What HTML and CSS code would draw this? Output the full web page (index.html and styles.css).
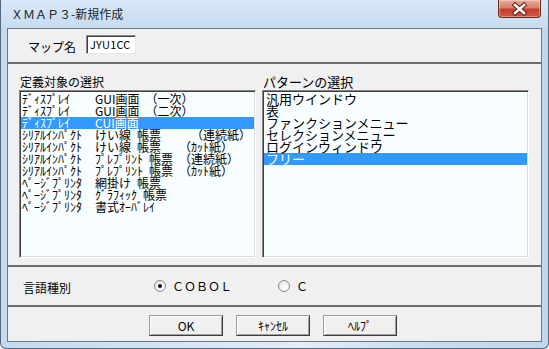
FILE: index.html
```html
<!DOCTYPE html>
<html lang="ja">
<head>
<meta charset="utf-8">
<title>ＸＭＡＰ３-新規作成</title>
<link rel="stylesheet" href="styles.css">
</head>
<body>
<div class="window">
  <div class="titlebar">
    <span class="title">ＸＭＡＰ３-新規作成</span>
    <div class="close">
      <svg width="43" height="18" viewBox="0 0 43 18">
        <path d="M17 5 L26 13 M26 5 L17 13" stroke="#5b2218" stroke-width="4.6" stroke-linecap="square" fill="none"/>
        <path d="M17 5 L26 13 M26 5 L17 13" stroke="#ffffff" stroke-width="2.6" stroke-linecap="square" fill="none"/>
      </svg>
    </div>
  </div>
  <div class="client">
    <div class="sec-name">
      <span class="name-label">マップ名</span>
      <div class="input">JYU1CC</div>
    </div>
    <div class="sep"></div>
    <div class="sec-lists">
      <div class="col">
        <div class="cap">定義対象の選択</div>
        <div class="listbox lb-left">
          <div class="row"><span class="c1">ﾃﾞｨｽﾌﾟﾚｲ</span><span class="c2">GUI画面&#8194;（一次）</span></div>
          <div class="row"><span class="c1">ﾃﾞｨｽﾌﾟﾚｲ</span><span class="c2">GUI画面&#8194;（二次）</span></div>
          <div class="row sel"><span class="c1">ﾃﾞｨｽﾌﾟﾚｲ</span><span class="c2">CUI画面</span></div>
          <div class="row"><span class="c1">ｼﾘｱﾙｲﾝﾊﾟｸﾄ</span><span class="c2">けい線&#8194;帳票　　&#8194;（連続紙）</span></div>
          <div class="row"><span class="c1">ｼﾘｱﾙｲﾝﾊﾟｸﾄ</span><span class="c2">けい線&#8194;帳票　　（ｶｯﾄ紙）</span></div>
          <div class="row"><span class="c1">ｼﾘｱﾙｲﾝﾊﾟｸﾄ</span><span class="c2">ﾌﾟﾚﾌﾟﾘﾝﾄ&#8194;帳票　（連続紙）</span></div>
          <div class="row"><span class="c1">ｼﾘｱﾙｲﾝﾊﾟｸﾄ</span><span class="c2">ﾌﾟﾚﾌﾟﾘﾝﾄ&#8194;帳票　（ｶｯﾄ紙）</span></div>
          <div class="row"><span class="c1">ﾍﾟｰｼﾞﾌﾟﾘﾝﾀ</span><span class="c2">網掛け&#8194;帳票</span></div>
          <div class="row"><span class="c1">ﾍﾟｰｼﾞﾌﾟﾘﾝﾀ</span><span class="c2">ｸﾞﾗﾌｨｯｸ&#8194;帳票</span></div>
          <div class="row"><span class="c1">ﾍﾟｰｼﾞﾌﾟﾘﾝﾀ</span><span class="c2">書式ｵｰﾊﾞﾚｲ</span></div>
        </div>
      </div>
      <div class="col">
        <div class="cap">パターンの選択</div>
        <div class="listbox lb-right">
          <div class="row">汎用ウインドウ</div>
          <div class="row">表</div>
          <div class="row">ファンクションメニュー</div>
          <div class="row">セレクションメニュー</div>
          <div class="row">ログインウィンドウ</div>
          <div class="row sel">フリー</div>
        </div>
      </div>
    </div>
    <div class="sep"></div>
    <div class="sec-lang">
      <span class="lang-label">言語種別</span>
      <label class="radio radio-cobol"><span class="dot on"></span><span class="rtext">ＣＯＢＯＬ</span></label>
      <label class="radio"><span class="dot"></span><span class="rtext">Ｃ</span></label>
    </div>
    <div class="sep"></div>
    <div class="sec-buttons">
      <div class="btn">OK</div>
      <div class="btn">ｷｬﾝｾﾙ</div>
      <div class="btn">ﾍﾙﾌﾟ</div>
    </div>
  </div>
</div>
</body>
</html>
```
FILE: styles.css
```css
html, body {
  margin: 0;
  padding: 0;
  background: #ffffff;
}
body {
  font-family: "Noto Sans CJK JP", "Noto Sans", sans-serif;
  font-size: 12px;
  color: #000;
}
.window {
  width: 549px;
  height: 349px;
  box-sizing: border-box;
  display: flex;
  flex-direction: column;
  border: 1px solid #55687c;
  border-top: none;
  border-radius: 0 0 6px 6px;
  padding: 0 6px 6px 6px;
  background: linear-gradient(90deg, #c4dbf0 0%, #d2e4f5 30%, #e2eef9 55%, #c9def2 75%, #bfd7ee 100%);
}
.titlebar {
  height: 28px;
  flex: none;
  display: flex;
  justify-content: space-between;
  align-items: flex-start;
  margin: 0 -6px 0 -6px;
  padding: 0 7px 0 10px;
  background: linear-gradient(180deg, #d8e8f7 0%, #cfe2f4 50%, #c5dcf1 100%);
}
.title {
  margin-top: 6px;
  font-size: 12px;
  line-height: 16px;
  color: #222;
}
.close {
  width: 43px;
  height: 18px;
  box-sizing: border-box;
  border: 1px solid #6a2a20;
  border-top: none;
  border-radius: 0 0 4px 4px;
  background: linear-gradient(180deg, #e9a99b 0%, #d9806e 45%, #c5402c 55%, #d0583f 100%);
  box-shadow: inset 0 0 0 1px rgba(255,255,255,0.35);
  overflow: hidden;
}
.close svg {
  display: block;
  margin-left: -1px;
}
.client {
  flex: 1;
  display: flex;
  flex-direction: column;
  border: 1px solid #6d7885;
  background: #f0f0f0;
}
.sep {
  height: 2px;
  flex: none;
  background: #6c6c6c;
}
.sec-name {
  height: 33px;
  flex: none;
  display: flex;
  align-items: center;
  padding-left: 20px;
  box-sizing: border-box;
}
.name-label {
  line-height: 14px;
  margin-top: 2px;
  width: 58px;
}
.input {
  width: 50px;
  height: 19px;
  box-sizing: border-box;
  margin-top: -2px;
  background: #fff;
  border: 1px solid;
  border-color: #8a8a8a #e6e6e6 #e6e6e6 #8a8a8a;
  box-shadow: inset 1px 1px 0 #3c3c3c;
  padding: 1px 0 0 3px;
  font-size: 11px;
  line-height: 15px;
  letter-spacing: 0.2px;
}
.sec-lists {
  height: 201px;
  flex: none;
  box-sizing: border-box;
  padding: 10px 0 0 11px;
  display: flex;
  gap: 6px;
}
.col {
  display: flex;
  flex-direction: column;
}
.cap {
  height: 16px;
  line-height: 16px;
  padding-left: 1px;
}
.col:last-child .cap {
  font-size: 13px;
}
.listbox {
  height: 168px;
  box-sizing: border-box;
  background: #f8fdff;
  border: 1px solid;
  border-color: #858585 #ffffff #ffffff #858585;
  box-shadow: inset 1px 1px 0 #3f3f3f, inset -1px -1px 0 #dcdcdc;
  padding: 2px 1px 1px 1px;
  overflow: hidden;
}
.lb-left {
  width: 237px;
}
.lb-right {
  width: 267px;
}
.row {
  height: 12px;
  line-height: 12px;
  padding-left: 1px;
  white-space: pre;
}
.lb-left .row {
  font-size: 12px;
}
.lb-right .row {
  font-size: 13px;
  padding-left: 2px;
}
.row.sel {
  background: #3399ff;
  color: #fff;
}
.c1 {
  display: inline-block;
  width: 73px;
}
.sec-lang {
  height: 38px;
  flex: none;
  display: flex;
  align-items: center;
  padding-left: 15px;
}
.lang-label {
  width: 131px;
  margin-top: 2px;
}
.radio {
  display: flex;
  align-items: center;
  gap: 6px;
}
.radio-cobol {
  width: 124px;
}
.dot {
  width: 12px;
  height: 12px;
  box-sizing: border-box;
  border-radius: 50%;
  border: 1px solid #8a8e93;
  background: radial-gradient(circle at 60% 65%, #ffffff 0%, #f2f2f2 45%, #d6d8da 100%);
  position: relative;
}
.dot.on::after {
  content: "";
  position: absolute;
  left: 3px;
  top: 3px;
  width: 4px;
  height: 4px;
  border-radius: 50%;
  background: #111;
}
.rtext {
  font-size: 12px;
  line-height: 14px;
}
.sec-buttons {
  flex: 1;
  display: flex;
  align-items: flex-start;
  padding: 8px 0 0 141px;
  gap: 13px;
}
.btn {
  width: 74px;
  height: 21px;
  box-sizing: border-box;
  background: #f0f0f0;
  border: 1px solid;
  border-color: #9a9a9a #3c3c3c #3c3c3c #9a9a9a;
  box-shadow: inset 1px 1px 0 #ffffff, inset -1px -1px 0 #a0a0a0;
  display: flex;
  align-items: center;
  justify-content: center;
  font-size: 12px;
  line-height: 14px;
}
```
